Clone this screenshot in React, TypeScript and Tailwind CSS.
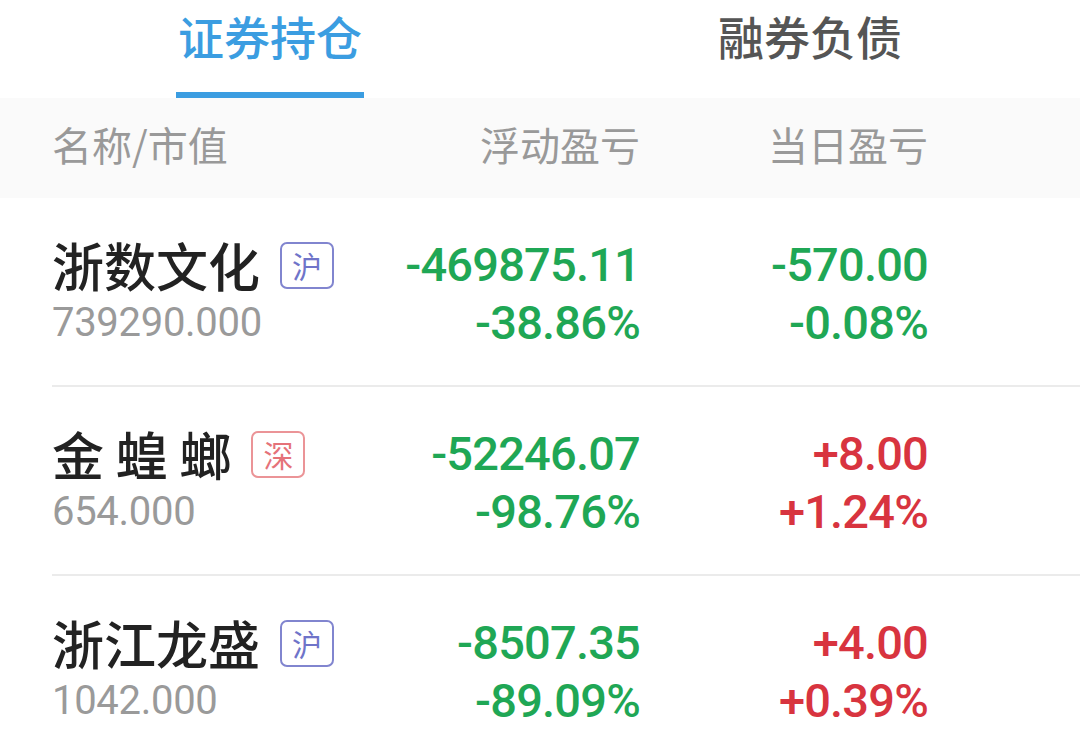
import React from "react";

const cjk = "font-['Noto_Sans_CJK_SC',sans-serif]";
const num = "font-['Roboto','Noto_Sans_CJK_SC',sans-serif]";

type Row = {
  name: string;
  market: "沪" | "深";
  value: string;
  float: string;
  floatPct: string;
  day: string;
  dayPct: string;
};

const rows: Row[] = [
  {
    name: "浙数文化",
    market: "沪",
    value: "739290.000",
    float: "-469875.11",
    floatPct: "-38.86%",
    day: "-570.00",
    dayPct: "-0.08%",
  },
  {
    name: "金 蝗 螂",
    market: "深",
    value: "654.000",
    float: "-52246.07",
    floatPct: "-98.76%",
    day: "+8.00",
    dayPct: "+1.24%",
  },
  {
    name: "浙江龙盛",
    market: "沪",
    value: "1042.000",
    float: "-8507.35",
    floatPct: "-89.09%",
    day: "+4.00",
    dayPct: "+0.39%",
  },
];

const tone = (v: string) =>
  v.startsWith("-") ? "text-[#1fa755]" : "text-[#d8343f]";

const Badge = ({ market }: { market: Row["market"] }) => (
  <span
    className={`ml-[20px] flex h-[47px] w-[54px] items-center justify-center rounded-[7px] border-2 text-[30px] leading-none ${cjk} ${
      market === "沪"
        ? "border-[#8185cf] text-[#6f74c9]"
        : "border-[#eb9497] text-[#e57279]"
    }`}
  >
    {market}
  </span>
);

export default function App() {
  return (
    <div className="h-[734px] w-[1080px] overflow-hidden bg-white">
      {/* tabs */}
      <div className="grid h-[98px] grid-cols-2">
        <div className="flex flex-col">
          <div
            className={`flex h-[92px] items-center justify-center pb-[22px] text-[46px] font-medium text-[#3b9de1] ${cjk}`}
          >
            证券持仓
          </div>
          <div className="ml-[176px] h-[6px] w-[188px] bg-[#3b9de1]" />
        </div>
        <div
          className={`flex items-center justify-center pb-[28px] text-[46px] font-medium text-[#555555] ${cjk}`}
        >
          融券负债
        </div>
      </div>

      {/* table header */}
      <div
        className={`flex h-[100px] items-center bg-[#fafafa] pb-[8px] pl-[52px] text-[40px] text-[#999999] ${cjk}`}
      >
        <div className="w-[350px]">名称/市值</div>
        <div className="w-[238px] text-right">浮动盈亏</div>
        <div className="w-[288px] text-right">当日盈亏</div>
      </div>

      {/* rows */}
      {rows.map((r, i) => (
        <div key={i} className="pl-[52px]">
          <div className="flex h-[187px] items-start pt-[38px]">
            <div className="w-[350px]">
              <div className="flex h-[58px] items-center">
                <span
                  className={`text-[52px] font-medium leading-none text-[#222222] ${cjk}`}
                >
                  {r.name}
                </span>
                <Badge market={r.market} />
              </div>
              <div
                className={`flex h-[58px] items-center text-[40px] leading-none tracking-[-0.3px] text-[#9a9a9a] ${num}`}
              >
                {r.value}
              </div>
            </div>
            <div
              className={`w-[238px] text-right text-[47px] font-medium tracking-[-0.8px] ${num}`}
            >
              <div className={`flex h-[58px] items-center justify-end ${tone(r.float)}`}>
                {r.float}
              </div>
              <div className={`flex h-[58px] items-center justify-end ${tone(r.floatPct)}`}>
                {r.floatPct}
              </div>
            </div>
            <div
              className={`w-[288px] text-right text-[47px] font-medium tracking-[-0.8px] ${num}`}
            >
              <div className={`flex h-[58px] items-center justify-end ${tone(r.day)}`}>
                {r.day}
              </div>
              <div className={`flex h-[58px] items-center justify-end ${tone(r.dayPct)}`}>
                {r.dayPct}
              </div>
            </div>
          </div>
          {i < rows.length - 1 && <div className="h-[2px] bg-[#ebebeb]" />}
        </div>
      ))}
    </div>
  );
}
